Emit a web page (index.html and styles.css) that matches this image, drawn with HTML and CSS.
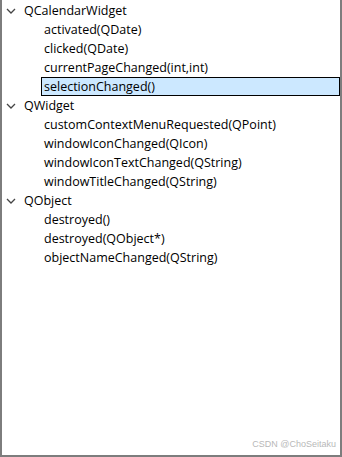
FILE: index.html
```html
<!DOCTYPE html>
<html>
<head>
<meta charset="utf-8">
<link rel="stylesheet" href="styles.css">
</head>
<body>
<div class="panel">
  <ul class="tree">
    <li class="group">
      <div class="row head"><svg class="chev" width="10" height="6" viewBox="0 0 10 6"><path d="M1 1 L5 5 L9 1" fill="none" stroke="#444" stroke-width="1.3"/></svg><span>QCalendarWidget</span></div>
      <ul class="kids">
        <li class="row">activated(QDate)</li>
        <li class="row">clicked(QDate)</li>
        <li class="row">currentPageChanged(int,int)</li>
        <li class="row sel">selectionChanged()</li>
      </ul>
    </li>
    <li class="group">
      <div class="row head"><svg class="chev" width="10" height="6" viewBox="0 0 10 6"><path d="M1 1 L5 5 L9 1" fill="none" stroke="#444" stroke-width="1.3"/></svg><span>QWidget</span></div>
      <ul class="kids">
        <li class="row">customContextMenuRequested(QPoint)</li>
        <li class="row">windowIconChanged(QIcon)</li>
        <li class="row">windowIconTextChanged(QString)</li>
        <li class="row">windowTitleChanged(QString)</li>
      </ul>
    </li>
    <li class="group">
      <div class="row head"><svg class="chev" width="10" height="6" viewBox="0 0 10 6"><path d="M1 1 L5 5 L9 1" fill="none" stroke="#444" stroke-width="1.3"/></svg><span>QObject</span></div>
      <ul class="kids">
        <li class="row">destroyed()</li>
        <li class="row">destroyed(QObject*)</li>
        <li class="row">objectNameChanged(QString)</li>
      </ul>
    </li>
  </ul>
  <div class="mark">CSDN @ChoSeitaku</div>
</div>
</body>
</html>
```
FILE: styles.css
```css
html, body { margin: 0; padding: 0; background: #fff; }
.panel {
  width: 338px;
  height: 455px;
  border-left: 2px solid #7d7d7d;
  border-right: 2px solid #7d7d7d;
  border-bottom: 2px solid #7d7d7d;
  display: flex;
  flex-direction: column;
  justify-content: space-between;
  font-family: "Open Sans", sans-serif;
  font-size: 12.5px;
  color: #000;
}
.tree, .kids { list-style: none; margin: 0; padding: 0; }
.tree { padding-top: 1px; }
.row {
  box-sizing: border-box;
  height: 19px;
  line-height: 17px;
  border: 1px solid transparent;
  white-space: nowrap;
}
.head { display: flex; align-items: center; padding-left: 3px; }
.chev { margin-right: 8px; }
.kids .row { margin-left: 39px; padding-left: 2px; }
.kids .row.sel { background: #cce8ff; border-color: #000; }
.mark {
  align-self: flex-end;
  font-family: "Liberation Sans", sans-serif;
  font-size: 9px;
  color: #b8b8b8;
  padding: 0 4px 6px 0;
}
```
